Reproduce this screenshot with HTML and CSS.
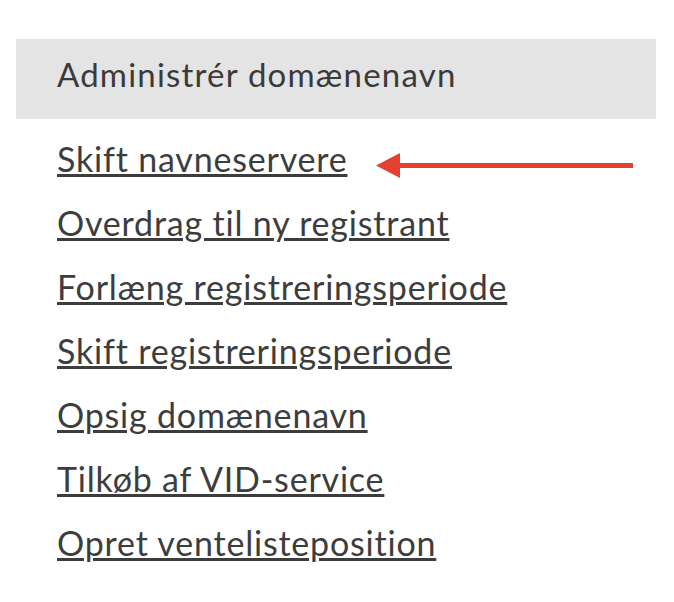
FILE: index.html
```html
<!DOCTYPE html>
<html lang="da">
<head>
<meta charset="utf-8">
<title>Administrér domænenavn</title>
<link rel="stylesheet" href="styles.css">
</head>
<body>
<div class="panel">
  <div class="panel-head">Administrér domænenavn</div>
  <ul class="links">
    <li class="item">
      <a href="#">Skift navneservere</a>
      <svg class="arrow" width="262" height="28" viewBox="0 0 262 28" aria-hidden="true">
        <line x1="20" y1="13.5" x2="257" y2="13.5" stroke="#e4402f" stroke-width="5" stroke-linecap="butt"/>
        <polygon points="0,13.5 24,1 24,26" fill="#e4402f"/>
      </svg>
    </li>
    <li class="item"><a href="#">Overdrag til ny registrant</a></li>
    <li class="item"><a href="#">Forlæng registreringsperiode</a></li>
    <li class="item"><a href="#">Skift registreringsperiode</a></li>
    <li class="item"><a href="#">Opsig domænenavn</a></li>
    <li class="item"><a href="#">Tilkøb af VID-service</a></li>
    <li class="item"><a href="#">Opret ventelisteposition</a></li>
  </ul>
</div>
</body>
</html>
```

FILE: styles.css
```css
html, body {
  margin: 0;
  padding: 0;
  background: #ffffff;
}

body {
  font-family: "Lato", "Liberation Sans", sans-serif;
  color: #3d3d3d;
}

.panel {
  padding: 39px 18px 0 16px;
}

.panel-head {
  height: 80px;
  box-sizing: border-box;
  background: #e4e4e4;
  padding: 15px 0 0 41px;
  font-size: 33px;
  line-height: 40px;
  letter-spacing: 1.2px;
  color: #3a3a3a;
}

.links {
  list-style: none;
  margin: 0;
  padding: 8px 0 0 41px;
  display: flex;
  flex-direction: column;
}

.item {
  position: relative;
  height: 64px;
  line-height: 64px;
}

.item a {
  font-size: 34px;
  letter-spacing: 0.8px;
  color: #3d3d3d;
  text-decoration: underline;
  text-decoration-thickness: 3px;
  text-underline-offset: 2px;
}

.arrow {
  position: absolute;
  left: 319px;
  top: 25px;
}
```
